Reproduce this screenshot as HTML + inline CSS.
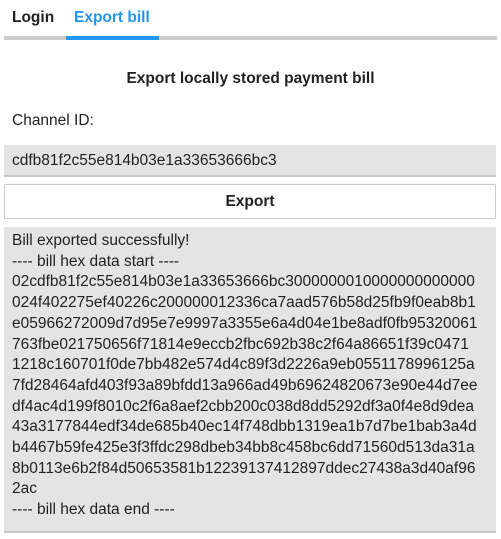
<!DOCTYPE html>
<html><head><meta charset="utf-8"><style>
body{margin:0;width:501px;height:539px;background:#fff;font-family:"Liberation Sans",sans-serif;color:#222;overflow:hidden;position:relative}
.tabs{position:absolute;left:4px;top:0;width:493px;height:40px;border-bottom:4px solid #ccc;box-sizing:border-box}
.tab{position:absolute;top:9px;font-weight:bold;font-size:15.5px}
.ul{position:absolute;left:66px;top:36px;width:93px;height:4px;background:#2196f3}
.title{position:absolute;top:70px;left:0;width:501px;text-align:center;font-weight:bold;font-size:15.5px}
.lbl{position:absolute;left:12px;top:112px;font-size:15.5px}
.inp{position:absolute;left:4px;top:145px;width:492px;height:32px;background:#e4e4e4;border-bottom:2px solid #c8c8c8;box-sizing:border-box;padding:7px 8px;font-size:15.5px}
.btn{position:absolute;left:4px;top:184px;width:492px;height:35px;border:1px solid #ccc;box-sizing:border-box;text-align:center;font-weight:bold;font-size:15.5px;line-height:33px}
.out{position:absolute;left:4px;top:227px;width:492px;height:306px;background:#e4e4e4;border-bottom:2px solid #c8c8c8;box-sizing:border-box;padding:4px 8px;font-size:15.5px;line-height:20.7px;white-space:pre}
</style></head><body>
<div class="tabs"></div><div class="ul"></div>
<div class="tab" style="left:12px">Login</div>
<div class="tab" style="left:74px;color:#2196f3">Export bill</div>
<div class="title">Export locally stored payment bill</div>
<div class="lbl">Channel ID:</div>
<div class="inp">cdfb81f2c55e814b03e1a33653666bc3</div>
<div class="btn">Export</div>
<div class="out">Bill exported successfully!
---- bill hex data start ----
02cdfb81f2c55e814b03e1a33653666bc3000000010000000000000
024f402275ef40226c200000012336ca7aad576b58d25fb9f0eab8b1
e05966272009d7d95e7e9997a3355e6a4d04e1be8adf0fb95320061
763fbe021750656f71814e9eccb2fbc692b38c2f64a86651f39c0471
1218c160701f0de7bb482e574d4c89f3d2226a9eb0551178996125a
7fd28464afd403f93a89bfdd13a966ad49b69624820673e90e44d7ee
df4ac4d199f8010c2f6a8aef2cbb200c038d8dd5292df3a0f4e8d9dea
43a3177844edf34de685b40ec14f748dbb1319ea1b7d7be1bab3a4d
b4467b59fe425e3f3ffdc298dbeb34bb8c458bc6dd71560d513da31a
8b0113e6b2f84d50653581b12239137412897ddec27438a3d40af96
2ac
---- bill hex data end ----</div>
</body></html>
